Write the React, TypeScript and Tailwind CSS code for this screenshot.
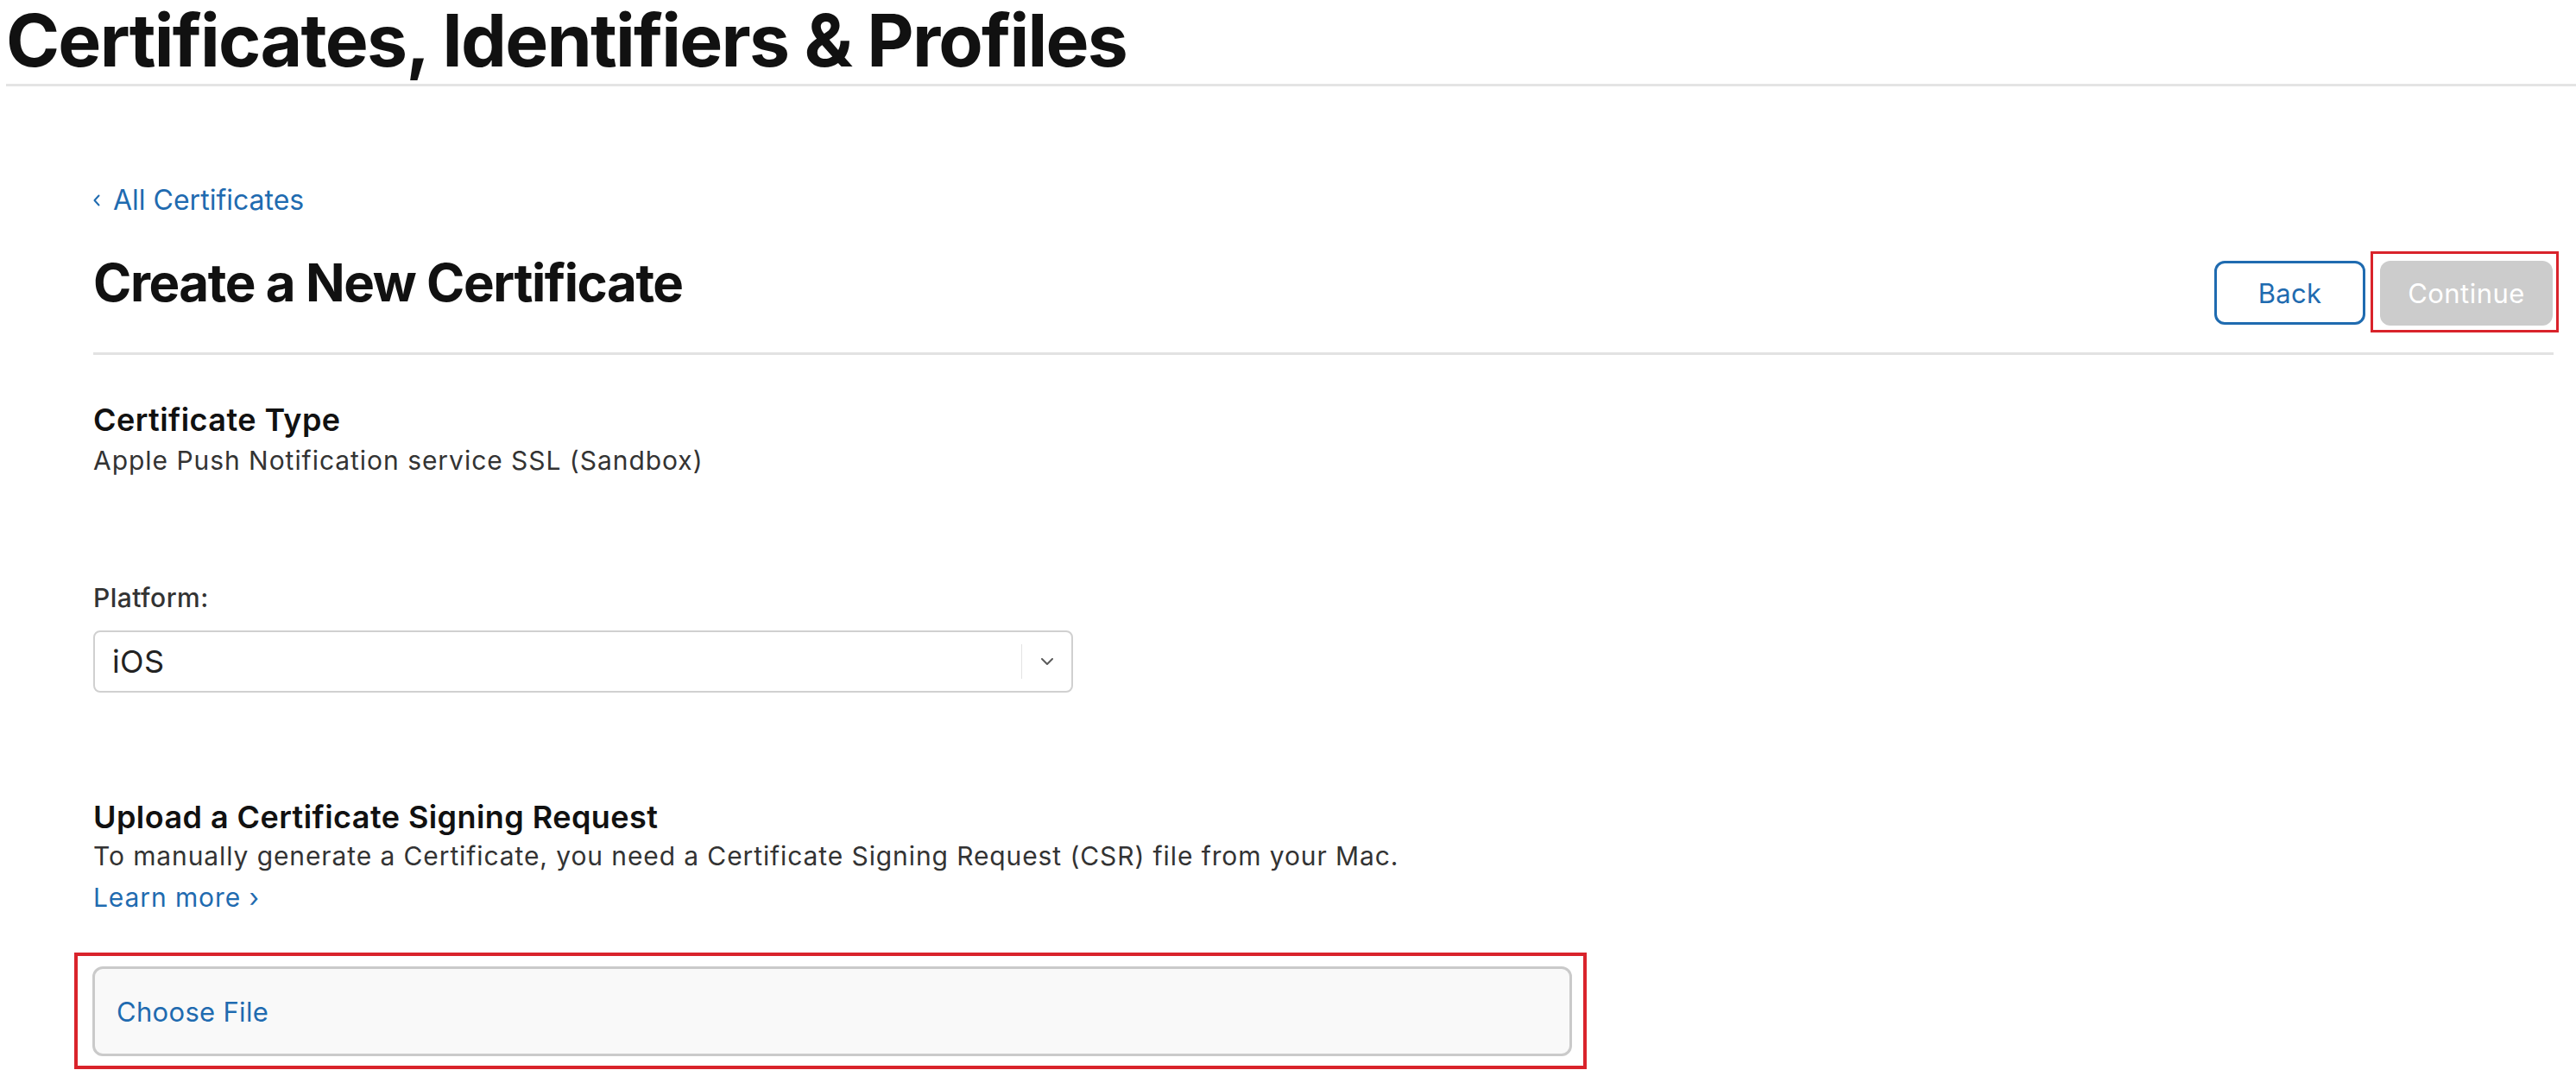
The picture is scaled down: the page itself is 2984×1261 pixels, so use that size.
export default function App() {
  return (
    <div className="min-h-screen w-full bg-white text-[#333] [font-family:Inter,'Noto_Sans',sans-serif]">
      <header className="ml-[7px] border-b-[3px] border-[#e4e4e4] pt-[5px] pb-[8px]">
        <h1 className="text-[84px] font-bold leading-none tracking-[-0.021em] text-[#111]">
          Certificates, Identifiers &amp; Profiles
        </h1>
      </header>

      <main className="flex flex-col pl-[108px] pr-[26px]">
        <a className="mt-[116px] flex items-center gap-[15px] text-[32px] leading-none text-[#1f6bb0]">
          <svg width="8" height="14" viewBox="0 0 8 14" fill="none">
            <path d="M6.5 1.5 1.5 7l5 5.5" stroke="#1f6bb0" strokeWidth="2" strokeLinecap="round" strokeLinejoin="round" />
          </svg>
          <span>All Certificates</span>
        </a>

        <div className="mt-[43px] flex items-start justify-between">
          <h2 className="mt-[6px] text-[60px] font-bold leading-none tracking-[-0.024em] text-[#111]">
            Create a New Certificate
          </h2>
          <div className="-mr-[6px] flex items-start gap-[6px]">
            <button className="mt-[11px] h-[74px] w-[175px] rounded-[12px] border-[3px] border-[#1f6bb0] text-[31px] leading-none tracking-[0.01em] text-[#1f6bb0]">
              Back
            </button>
            <div className="border-[3px] border-[#d9232b] pt-[8px] pr-[4px] pb-[5px] pl-[8px]">
              <button className="h-[75px] w-[200px] rounded-[12px] bg-[#cccccc] text-[31px] leading-none tracking-[0.015em] text-white">
                Continue
              </button>
            </div>
          </div>
        </div>

        <div className="mt-[23px] h-[3px] bg-[#e2e2e2]" />

        <h3 className="mt-[57px] text-[36px] font-semibold leading-none tracking-[0.012em] text-[#111]">
          Certificate Type
        </h3>
        <p className="mt-[14px] text-[30px] leading-none tracking-[0.032em] text-[#333]">
          Apple Push Notification service SSL (Sandbox)
        </p>

        <label className="mt-[129px] text-[30px] font-medium leading-none tracking-[0.015em] text-[#333]">
          Platform:
        </label>
        <div className="mt-[23px] flex h-[72px] w-[1135px] items-center rounded-[8px] border-2 border-[#d0d0d0] bg-white">
          <span className="flex-1 pl-[20px] text-[36px] leading-none tracking-[0.01em] text-[#222]">iOS</span>
          <span className="h-[40px] w-px bg-[#e3e3e3]" />
          <span className="flex w-[57px] justify-center">
            <svg width="16" height="10" viewBox="0 0 16 10" fill="none">
              <path d="M2 2l6 6 6-6" stroke="#5a5a5a" strokeWidth="2" strokeLinecap="round" strokeLinejoin="round" />
            </svg>
          </span>
        </div>

        <h3 className="mt-[126px] text-[36px] font-semibold leading-none tracking-[0.012em] text-[#111]">
          Upload a Certificate Signing Request
        </h3>
        <p className="mt-[12px] text-[30px] leading-none tracking-[0.03em] text-[#333]">
          To manually generate a Certificate, you need a Certificate Signing Request (CSR) file from your Mac.
        </p>
        <a className="mt-[18px] text-[30px] leading-none tracking-[0.03em] text-[#1f6bb0]">Learn more ›</a>

        <div className="mt-[49px] -ml-[22px] w-[1752px] border-4 border-[#d9232b] pt-[12px] pr-[13px] pb-[11px] pl-[17px]">
          <div className="flex h-[104px] items-center rounded-[12px] border-[3px] border-[#cacaca] bg-[#f9f9f9] pl-[25px] text-[31px] leading-none tracking-[0.01em] text-[#1f6bb0]">
            Choose File
          </div>
        </div>
      </main>
    </div>
  );
}
